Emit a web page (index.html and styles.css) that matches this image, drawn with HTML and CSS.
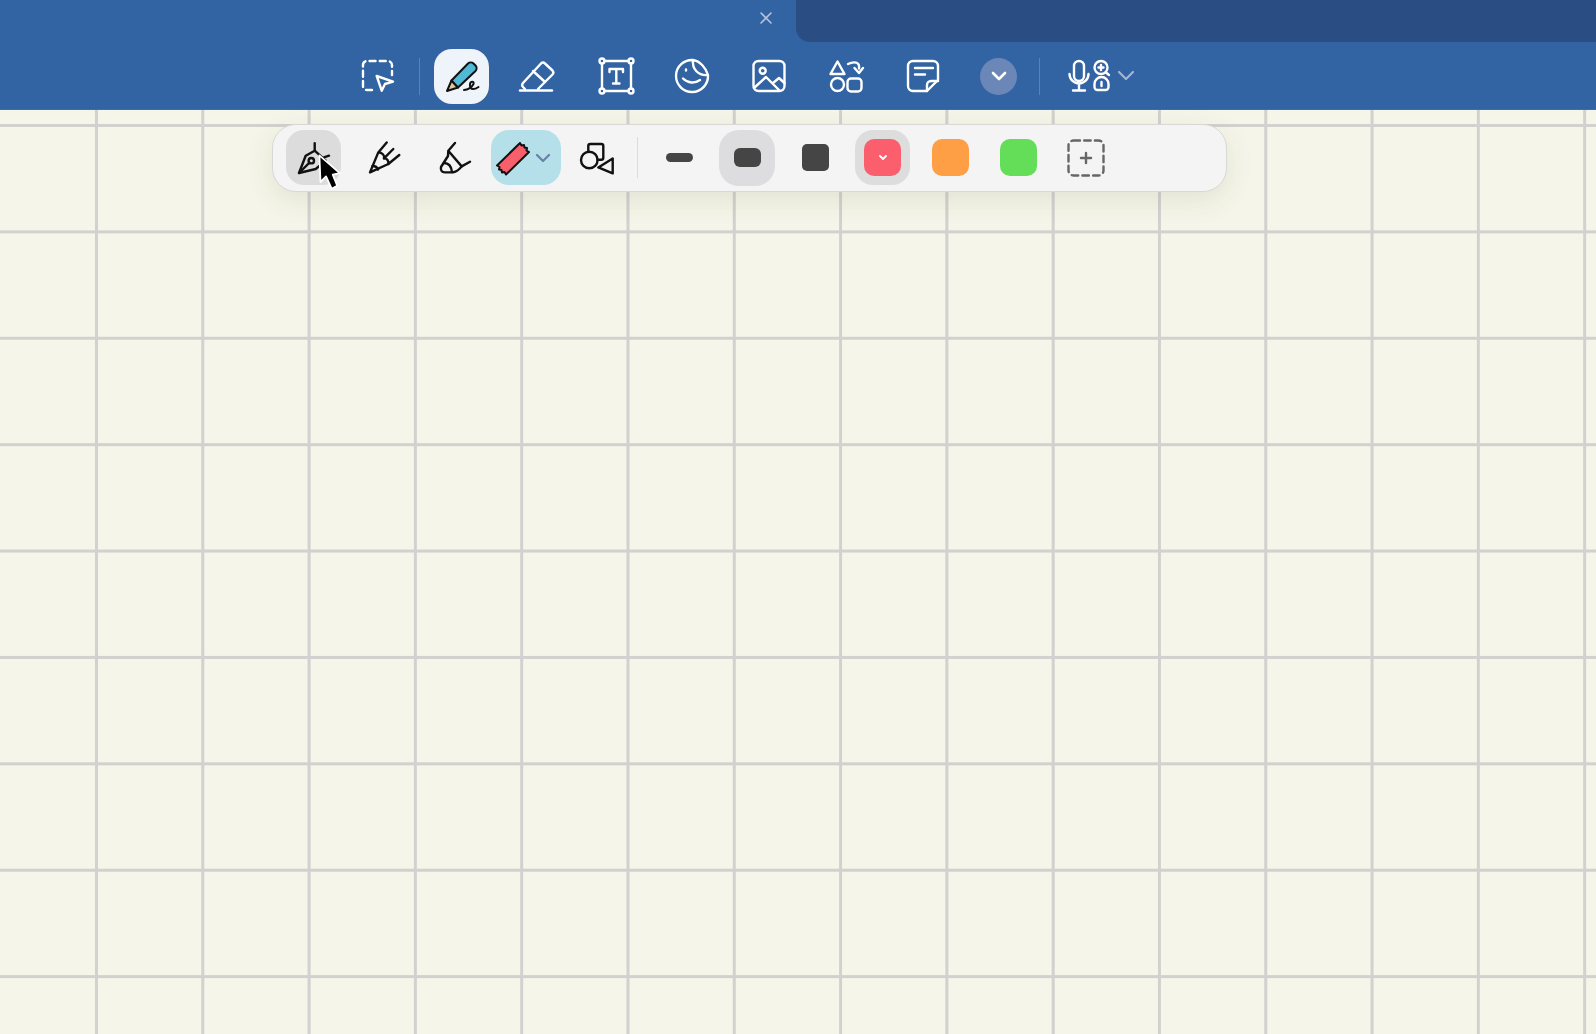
FILE: index.html
```html
<!DOCTYPE html>
<html lang="en">
<head>
  <meta charset="UTF-8" />
  <title>Notes</title>
  <link rel="stylesheet" href="styles.css">
</head>
<body>

  <header class="header">
    <div class="tabs">
      <div class="tab-active">
        <svg class="close" width="14" height="14" viewBox="0 0 14 14"><path d="M2 2 12 12M12 2 2 12"/></svg>
      </div>
      <div class="tab-rest"></div>
    </div>

    <div class="toolbar">
      <button class="tool tool-select">
        <svg class="ico" width="40" height="40" viewBox="0 0 40 40">
          <path stroke-dasharray="6 4.2" d="M14 34H9a4 4 0 0 1-4-4V9a4 4 0 0 1 4-4h21a4 4 0 0 1 4 4v10"/>
          <path d="M18.7 20 35 25.7 27 28l-3.3 6.7z"/>
        </svg>
      </button>
      <div class="sep"></div>
      <button class="tool-pen">
        <svg class="ico ico-dark ico-thin" width="40" height="40" viewBox="0 0 40 40">
          <path class="fill-wood" d="M5 35 9.500 24.500 16 31.500z"/>
          <path class="fill-blue" d="M9.500 24.500 26 7.500a4 4 0 0 1 5.500 0l2 2a4 4 0 0 1 0 5.500L16 31.500z"/>
          <path d="M22 34c4 0 8-3 9.500-6 1-3-3-3-3.500 0-.5 3 1 5 3 5 2 0 4-1 5.500-2"/>
        </svg>
      </button>
      <button class="tool tool-eraser">
        <svg class="ico" width="40" height="40" viewBox="0 0 40 40">
          <path d="M6 27 24 7.500a3 3 0 0 1 4 0l7.500 7a3 3 0 0 1 0 4L21 33"/>
          <path d="M6 27a3 3 0 0 0 0 4l2 2M16 15l12 11"/>
          <path d="M3 34.500h32"/>
        </svg>
      </button>
      <button class="tool">
        <svg class="ico" width="40" height="40" viewBox="0 0 40 40">
          <path d="M9.500 5h24M36 7.500v25M33.500 35h-24M7 32.500v-25"/>
          <circle cx="7" cy="5" r="2.500"/><circle cx="36" cy="5" r="2.500"/>
          <circle cx="7" cy="35" r="2.500"/><circle cx="36" cy="35" r="2.500"/>
          <path d="M14.500 16v-3h13.500v3M21.300 13v14.500M18 27.500h6.500"/>
        </svg>
      </button>
      <button class="tool">
        <svg class="ico" width="40" height="40" viewBox="0 0 40 40">
          <path d="M36 19A16 16 0 1 1 21 4c7 1 13 8 15 15zM21 4c-1 9 5 16 15 15"/>
          <path d="M14 13.500v1M11 22.500c5 5 12 5 17 1.500"/>
        </svg>
      </button>
      <button class="tool">
        <svg class="ico" width="40" height="40" viewBox="0 0 40 40">
          <rect x="4.500" y="5" width="31" height="30" rx="5"/>
          <circle cx="13.700" cy="14.700" r="3"/>
          <path d="M5 32 17 21l13 13M24 27l6-5 5.500 5"/>
        </svg>
      </button>
      <button class="tool">
        <svg class="ico" width="40" height="40" viewBox="0 0 40 40">
          <path d="M11.500 5.500 18.500 18h-14z"/>
          <circle cx="11.500" cy="28.500" r="6.500"/>
          <rect x="21.500" y="22.500" width="14" height="13" rx="3.500"/>
          <path d="M22 8c6-3 12-2 11 4.500M28.500 12l4.500 5 4-5"/>
        </svg>
      </button>
      <button class="tool">
        <svg class="ico" width="40" height="40" viewBox="0 0 40 40">
          <path d="M10 5h20a5 5 0 0 1 5 5v14L24 35H10a5 5 0 0 1-5-5V10a5 5 0 0 1 5-5z"/>
          <path d="M35 25h-7a4 4 0 0 0-4 4v6M12 12h18M12 18.500h10"/>
        </svg>
      </button>
      <button class="more">
        <svg width="18" height="12" viewBox="0 0 18 12"><path d="M3 3l6 6 6-6"/></svg>
      </button>
      <div class="sep sep-right"></div>
      <button class="voice">
        <svg class="ico" width="46" height="34" viewBox="0 0 46 34">
          <rect x="6" y="2" width="10" height="20" rx="5"/>
          <path d="M1.500 15a9.500 9.500 0 0 0 19 0M11 25v6M5 31.500h12"/>
          <circle cx="33" cy="8.500" r="6.500"/>
          <path d="M33 6v5M30.500 8.500h5M38 13.500l3 2.500"/>
          <path d="M26.500 25a7 7 0 0 1 14 0v3a3 3 0 0 1-3 3h-8a3 3 0 0 1-3-3z"/>
          <path d="M33.500 23v4"/>
        </svg>
        <svg class="voice-arrow" width="18" height="12" viewBox="0 0 18 12"><path d="M2 2l7 7 7-7"/></svg>
      </button>
    </div>
  </header>

  <main class="canvas">
    <div class="pen-bar">
      <button class="pen-btn pen-btn-on">
        <svg class="ico ico-dark" width="40" height="40" viewBox="0 0 40 40">
          <path d="M5 35 11.700 17.700 20.700 12.700 31.700 22.700 21.700 31z"/>
          <circle cx="17.300" cy="22.700" r="2.700"/>
          <path d="M5 35 15.500 24.700M20.700 12.700V5.300M30 19.400l5-1.700"/>
        </svg>
        <svg class="cursor" width="27" height="40" viewBox="0 0 24 36">
          <path d="M2 3 3 27l5-5 5 11 5-2.700-4-10 6.300-1.300z"/>
        </svg>
      </button>
      <button class="pen-btn">
        <svg class="ico ico-dark" width="40" height="40" viewBox="0 0 40 40">
          <path d="M22.700 4.400 14.300 14.400 6 34.400l18.300-8.400C25 23 23 20 20 20.400c1-3-2-6-5.700-6"/>
          <path d="M20 20.400 29.300 11M24.300 26l11-9M8.500 28c3 0 5 2 5.500 3.500"/>
        </svg>
      </button>
      <button class="pen-btn">
        <svg class="ico ico-dark" width="40" height="40" viewBox="0 0 40 40">
          <path d="M21 5 14.300 12.700 14 18 7 29q-1 5 4 5.400h8q5-1 8.700-6L14.300 12.700"/>
          <path d="M27.700 28.400 36 23.700M10 25q7 0 8 9"/>
        </svg>
      </button>
      <button class="tape-btn">
        <svg class="ico ico-dark ico-thin" width="36" height="36" viewBox="0 0 36 36">
          <path class="fill-red" d="M25 3l1.500 2.500 2.500-.5.500 2.500 2.500.5-.5 2.500 2.500 1.500L11 34.500l-1.500-2.500-2.500.5-.5-2.500-2.500-.5.500-2.500L2 25.500z"/>
        </svg>
        <svg class="tape-arrow" width="16" height="10" viewBox="0 0 16 10"><path d="M2 2l6 6 6-6"/></svg>
      </button>
      <button class="pen-btn pen-btn-shapes">
        <svg class="ico ico-dark" width="40" height="40" viewBox="0 0 40 40">
          <circle cx="13.300" cy="22" r="8.300"/>
          <path d="M12.300 13.700V8a2 2 0 0 1 2-2h11a2 2 0 0 1 2 2v11.700a2 2 0 0 1-2 2H21.600"/>
          <path d="M22.300 29.400 36.700 20.400V35.400z"/>
        </svg>
      </button>
      <div class="bar-sep"></div>

      <button class="size-btn"><span class="size size-s"></span></button>
      <button class="size-btn size-btn-on"><span class="size size-m"></span></button>
      <button class="size-btn"><span class="size size-l"></span></button>

      <button class="swatch-btn swatch-btn-on">
        <span class="swatch swatch-red">
          <svg width="10" height="7" viewBox="0 0 10 7"><path d="M2 2l3 3 3-3"/></svg>
        </span>
      </button>
      <button class="swatch-btn"><span class="swatch swatch-orange"></span></button>
      <button class="swatch-btn"><span class="swatch swatch-green"></span></button>
      <button class="swatch-btn swatch-btn-add">
        <svg class="add" width="38" height="38" viewBox="0 0 38 38">
          <rect x="1.500" y="1.500" width="35" height="35" rx="5" stroke-dasharray="6.500 4.200"/>
          <path d="M19 14v10M14 19h10"/>
        </svg>
      </button>
    </div>
  </main>

</body>
</html>
```

FILE: styles.css
```css
* { box-sizing: border-box; }
html, body {
  margin: 0;
  height: 100%;
  overflow: hidden;
}
body {
  display: flex;
  flex-direction: column;
  font-family: "Liberation Sans", sans-serif;
  background-color: #f5f5e9;
}
button {
  border: none;
  background: none;
  padding: 0;
  margin: 0;
  display: flex;
  align-items: center;
  justify-content: center;
  flex: none;
}

/* ===== HEADER ===== */
.header {
  flex: none;
  height: 110px;
  background-color: #3263a3;
  border-bottom: 1px solid #56687f;
}
.tabs {
  display: flex;
  height: 42px;
}
.tab-active {
  width: 796px;
  height: 36px;
  display: flex;
  align-items: center;
  justify-content: flex-end;
  padding-right: 23px;
}
.close path {
  fill: none;
  stroke: #b4c3da;
  stroke-width: 1.6;
  stroke-linecap: round;
}
.tab-rest {
  flex: 1;
  background-color: #2a4e83;
  border-bottom-left-radius: 14px;
}
.toolbar {
  display: flex;
  align-items: center;
  height: 67px;
  padding-top: 1px;
  padding-left: 358px;
}
.tool {
  width: 40px;
  height: 40px;
  margin-right: 37px;
}
.tool-select { margin-right: 21px; }
.tool-eraser { margin-right: 38px; }
.sep {
  width: 1px;
  height: 37px;
  background-color: rgba(255, 255, 255, 0.2);
  margin-right: 14px;
}
.tool-pen {
  width: 55px;
  height: 55px;
  border-radius: 18px;
  background-color: #eff3fa;
  margin-right: 28px;
}
.ico {
  fill: none;
  stroke: #fff;
  stroke-width: 2.4;
  stroke-linecap: round;
  stroke-linejoin: round;
}
.ico-dark { stroke: #111; }
.ico-thin { stroke-width: 2; }
.fill-wood { fill: #e2c99b; }
.fill-blue { fill: #4fb9d6; }
.fill-red { fill: #f85f6c; }

.more {
  width: 37px;
  height: 37px;
  border-radius: 50%;
  background-color: #6a87b8;
  margin-right: 22px;
}
.more path,
.voice-arrow path,
.tape-arrow path {
  fill: none;
  stroke-width: 2.6;
  stroke-linecap: round;
  stroke-linejoin: round;
}
.more path { stroke: #fff; }
.voice-arrow path { stroke: #a3b5d3; stroke-width: 2.2; }
.sep-right { margin-right: 28px; }
.voice {
  gap: 3px;
  height: 40px;
}

/* ===== CANVAS ===== */
.canvas {
  flex: 1;
  position: relative;
  background-color: #f5f5e9;
  background-image:
    linear-gradient(to right, #d1d1cf 3px, transparent 3px),
    linear-gradient(to bottom, #d1d1cf 3px, transparent 3px);
  background-size: 106.3px 106.4px;
  background-position: 95px 14px;
}
.pen-bar {
  position: absolute;
  left: 272px;
  top: 14px;
  width: 955px;
  height: 68px;
  display: flex;
  align-items: center;
  padding-left: 13px;
  padding-bottom: 1px;
  background-color: #f4f4f4;
  border: 1px solid #d8d8d6;
  border-radius: 24px;
  box-shadow: 0 8px 28px rgba(60, 60, 30, 0.1);
}
.pen-btn {
  position: relative;
  width: 55px;
  height: 55px;
  border-radius: 18px;
  margin-right: 15px;
}
.pen-btn-on { background-color: #dcdcdc; }
.pen-btn-shapes {
  width: 40px;
  margin-right: 0;
}
.cursor {
  position: absolute;
  left: 31px;
  top: 22px;
}
.cursor path {
  fill: #000;
  stroke: #fff;
  stroke-width: 1.6;
  stroke-linejoin: round;
}
.tape-btn {
  width: 70px;
  height: 55px;
  border-radius: 18px;
  background-color: #b5e0ea;
  margin-left: -5px;
  margin-right: 15px;
  gap: 4px;
  padding-right: 6px;
}
.tape-arrow path { stroke: #6b7fa8; stroke-width: 2.2; }
.bar-sep {
  width: 1px;
  height: 41px;
  background-color: #dcdcdc;
  margin: 0 13px 0 21px;
}
.size-btn {
  width: 56px;
  height: 56px;
  border-radius: 20px;
  margin-right: 12px;
}
.size-btn-on { background-color: #dddde0; }
.size {
  display: block;
  width: 27px;
  background-color: #454545;
}
.size-s { height: 9px; border-radius: 5px; }
.size-m { height: 19px; border-radius: 6px; }
.size-l { height: 27px; border-radius: 5px; }
.swatch-btn {
  width: 55px;
  height: 55px;
  border-radius: 18px;
  margin-right: 13px;
}
.swatch-btn-on { background-color: #dddddd; }
.swatch-btn-add { margin-left: -1px; }
.swatch {
  display: flex;
  align-items: center;
  justify-content: center;
  width: 37px;
  height: 37px;
  border-radius: 10px;
}
.swatch path {
  fill: none;
  stroke: #fff;
  stroke-width: 1.8;
  stroke-linecap: round;
  stroke-linejoin: round;
}
.swatch-red { background-color: #fb5f6d; }
.swatch-orange { background-color: #ff9f45; }
.swatch-green { background-color: #64dd58; }
.add {
  fill: none;
  stroke: #666;
  stroke-width: 2.4;
  stroke-linecap: round;
}
```
